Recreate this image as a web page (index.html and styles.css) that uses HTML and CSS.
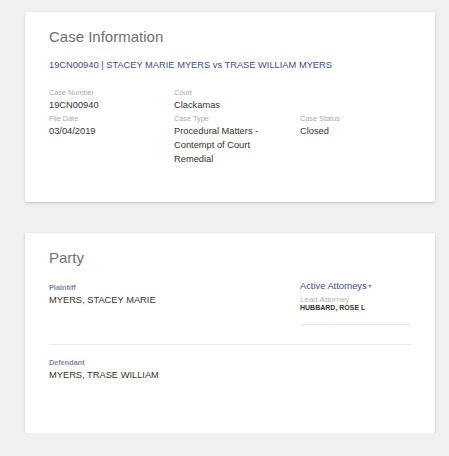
FILE: index.html
```html
<!DOCTYPE html>
<html>
<head>
<meta charset="utf-8">
<link rel="stylesheet" href="styles.css">
</head>
<body>
<div class="page">
  <section class="card case-card">
    <h2 class="card-title">Case Information</h2>
    <div class="case-heading">19CN00940 | STACEY MARIE MYERS vs TRASE WILLIAM MYERS</div>
    <div class="info-grid">
      <div class="field">
        <div class="label">Case Number</div>
        <div class="value">19CN00940</div>
      </div>
      <div class="field">
        <div class="label">Court</div>
        <div class="value">Clackamas</div>
      </div>
      <div class="field"></div>
      <div class="field">
        <div class="label">File Date</div>
        <div class="value">03/04/2019</div>
      </div>
      <div class="field">
        <div class="label">Case Type</div>
        <div class="value">Procedural Matters - Contempt of Court Remedial</div>
      </div>
      <div class="field">
        <div class="label">Case Status</div>
        <div class="value">Closed</div>
      </div>
    </div>
  </section>

  <section class="card party-card">
    <h2 class="card-title">Party</h2>
    <div class="party-row">
      <div class="party-main">
        <div class="party-label">Plaintiff</div>
        <div class="value">MYERS, STACEY MARIE</div>
      </div>
      <div class="attorneys">
        <div class="att-toggle">Active Attorneys<span class="caret"></span></div>
        <div class="att-label">Lead Attorney</div>
        <div class="att-name">HUBBARD, ROSE L</div>
      </div>
    </div>
    <div class="party-row defendant">
      <div class="party-main">
        <div class="party-label">Defendant</div>
        <div class="value">MYERS, TRASE WILLIAM</div>
      </div>
    </div>
  </section>
</div>
</body>
</html>
```

FILE: styles.css
```css
html, body {
  margin: 0;
  padding: 0;
  background: #f0f0f0;
  font-family: "Liberation Sans", Arial, sans-serif;
}
.page {
  display: flex;
  flex-direction: column;
  gap: 31px;
  padding: 12px 0 0 25px;
}
.card {
  box-sizing: border-box;
  width: 410px;
  background: #fff;
  border-radius: 2px;
  box-shadow: 0 1px 3px rgba(0,0,0,0.18);
  padding: 0 24px;
}
.case-card { height: 190px; }
.party-card { height: 200px; }
.card-title {
  margin: 0;
  padding-top: 16px;
  font-size: 15px;
  font-weight: normal;
  color: #707070;
  line-height: 18px;
}
.case-heading {
  margin-top: 13px;
  font-size: 9.3px;
  color: #3f4a8c;
  line-height: 13px;
}
.info-grid {
  display: grid;
  grid-template-columns: 125px 126px 1fr;
  margin-top: 16px;
  row-gap: 2px;
}
.label {
  font-size: 7.3px;
  color: #b3a7a7;
  line-height: 10px;
}
.value {
  font-size: 9.3px;
  color: #333;
  line-height: 14px;
}
.info-grid .value { padding-right: 22px; }
.party-row {
  display: flex;
  margin-top: 16px;
}
.party-main { width: 251px; }
.party-label {
  font-size: 7.3px;
  font-weight: bold;
  color: #7d88a6;
  line-height: 10px;
}
.attorneys {
  width: 111px;
  margin-top: -3px;
  border-bottom: 1px solid #e6e6e6;
  padding-bottom: 13px;
}
.att-toggle {
  font-size: 9.3px;
  color: #3f4a8c;
  line-height: 13px;
}
.caret {
  display: inline-block;
  width: 0;
  height: 0;
  border-left: 2.5px solid transparent;
  border-right: 2.5px solid transparent;
  border-top: 3px solid #999;
  vertical-align: middle;
  margin-left: 1px;
}
.att-label {
  margin-top: 2px;
  font-size: 8px;
  color: #b5b5b5;
  line-height: 10px;
}
.att-name {
  font-size: 7px;
  font-weight: bold;
  color: #333;
  line-height: 6px;
}
.defendant {
  border-top: 1px solid #e8e8e8;
  margin-top: 19px;
  padding-top: 13px;
}
```
